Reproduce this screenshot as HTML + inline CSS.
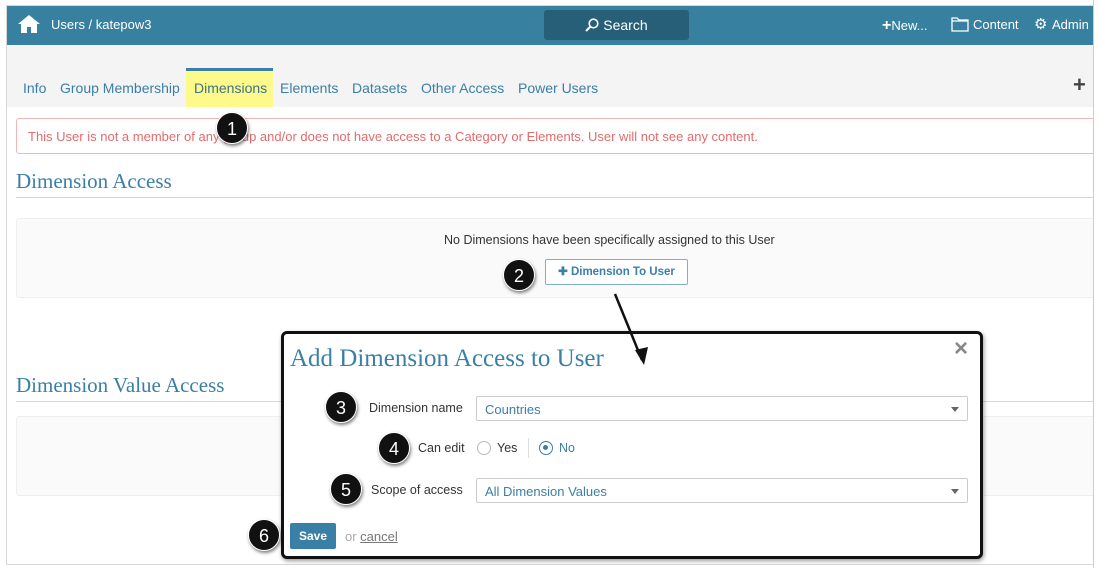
<!DOCTYPE html>
<html><head><style>
*{box-sizing:border-box;margin:0;padding:0}
body{width:1100px;height:568px;background:#fff;font-family:"Liberation Sans",Arial,sans-serif;position:relative;overflow:hidden}
.frame{position:absolute;left:6px;top:5px;width:1088px;height:560px;border:1px solid #d8d8d8;border-right:none}
.hdr{position:absolute;left:7px;top:6px;width:1086px;height:39px;background:#37809f;color:#fff}
.tabs{position:absolute;left:7px;top:45px;width:1086px;height:62px;background:#f4f4f4}
.tab{position:absolute;top:80px;font-size:14px;color:#3a7fa5}
.abs{position:absolute}
.badge{position:absolute;width:32px;height:32px;border-radius:50%;background:#111;color:#fff;font-size:18px;text-align:center;line-height:32px;box-shadow:1px 2px 3px rgba(0,0,0,.5);border:1.5px solid #fff}
.serif{font-family:"Liberation Serif","DejaVu Serif",serif;color:#3a7fa5}
.sel{position:absolute;left:476px;height:25px;width:492px;border:1px solid #ccc;border-radius:2px;font-size:13px;color:#3a7fa5;padding:5px 8px}
.sel:after{content:"";position:absolute;right:8px;top:10px;border:4px solid transparent;border-top:5px solid #666}
</style></head><body>
<div class="frame"></div>
<div class="hdr">
 <svg class="abs" style="left:11px;top:8px" width="22" height="20" viewBox="0 0 22 20"><path d="M11 1L0 10h3v9h6v-6h4v6h6v-9h3z" fill="#fff"/></svg>
 <div class="abs" style="left:44px;top:11px;font-size:13px">Users / katepow3</div>
 <div class="abs" style="left:537px;top:4px;width:145px;height:30px;background:#285f78;border-radius:3px;font-size:14px;text-align:center;line-height:30px">
  <svg width="14" height="14" viewBox="0 0 14 14" style="vertical-align:-2px"><circle cx="8.5" cy="5.5" r="4.3" fill="none" stroke="#fff" stroke-width="1.6"/><path d="M5.5 8.5L1 13" stroke="#fff" stroke-width="2"/></svg> Search</div>
 <div class="abs" style="left:875px;top:11px;font-size:13px"><b style="font-size:16px">+</b>New...</div>
 <svg class="abs" style="left:944px;top:11px" width="18" height="15" viewBox="0 0 18 15"><path d="M1 1h5l2 2h9v11H1z M1 4h16" fill="none" stroke="#fff" stroke-width="1.3"/></svg>
 <div class="abs" style="left:966px;top:11px;font-size:13px">Content</div>
 <div class="abs" style="left:1027px;top:9px;font-size:15px">⚙</div>
 <div class="abs" style="left:1045px;top:11px;font-size:13px">Admin</div>
</div>
<div class="tabs"></div>
<div class="abs" style="left:186px;top:68px;width:87px;height:39px;background:#fdf98a;border-top:3px solid #3a7fa5"></div>
<div class="tab" style="left:23px">Info</div>
<div class="tab" style="left:60px">Group Membership</div>
<div class="tab" style="left:194px;color:#3a7585">Dimensions</div>
<div class="tab" style="left:280px">Elements</div>
<div class="tab" style="left:352px">Datasets</div>
<div class="tab" style="left:421px">Other Access</div>
<div class="tab" style="left:518px">Power Users</div>
<div class="abs" style="left:1073px;top:72px;font-size:22px;font-weight:bold;color:#444">+</div>
<div class="abs" style="left:16px;top:118px;width:1100px;height:36px;border:1px solid #f0b8b8;border-radius:3px;color:#e06c6c;font-size:13px;padding:10px 11px">This User is not a member of any group and/or does not have access to a Category or Elements. User will not see any content.</div>
<div class="badge" style="left:216px;top:112px">1</div>
<div class="abs serif" style="left:16px;top:169px;font-size:21px">Dimension Access</div>
<div class="abs" style="left:16px;top:197px;width:1084px;border-top:1px solid #c9dbe3"></div>
<div class="abs" style="left:16px;top:218px;width:1100px;height:80px;border:1px solid #eee;background:#fafafa;border-radius:3px"></div>
<div class="abs" style="left:444px;top:233px;font-size:12.5px;color:#333">No Dimensions have been specifically assigned to this User</div>
<div class="abs" style="left:545px;top:259px;width:143px;height:26px;border:1px solid #7fb0c8;border-radius:2px;background:#fff;font-size:11.5px;font-weight:bold;color:#3a7fa5;text-align:center;line-height:24px">✚ Dimension To User</div>
<div class="badge" style="left:503px;top:259px">2</div>
<div class="abs serif" style="left:16px;top:373px;font-size:21px">Dimension Value Access</div>
<div class="abs" style="left:16px;top:401px;width:1084px;border-top:1px solid #c9dbe3"></div>
<div class="abs" style="left:16px;top:416px;width:1100px;height:80px;border:1px solid #eee;background:#fafafa;border-radius:3px"></div>
<div class="abs" style="left:1093px;top:0;width:7px;height:568px;background:#fff;border-left:1px solid #ccc"></div>
<div class="abs" style="left:281px;top:331px;width:702px;height:228px;border:3px solid #111;border-radius:6px;background:#fff;box-shadow:1px 2px 4px rgba(0,0,0,.4)"></div>
<svg class="abs" style="left:605px;top:290px" width="50" height="80"><path d="M10 4L37 70" stroke="#111" stroke-width="2.5"/><path d="M30 60L39 75L43 57z" fill="#111"/></svg>
<div class="abs serif" style="left:290px;top:345px;font-size:25px">Add Dimension Access to User</div>
<div class="abs" style="left:954px;top:335px;font-size:24px;color:#888;font-weight:bold">×</div>
<div class="abs" style="left:369px;top:401px;font-size:12.5px;color:#333">Dimension name</div>
<div class="sel" style="top:396px">Countries</div>
<div class="badge" style="left:325px;top:391px">3</div>
<div class="abs" style="left:418px;top:441px;font-size:12.5px;color:#333">Can edit</div>
<div class="abs" style="left:477px;top:441px;width:14px;height:14px;border:1px solid #bbb;border-radius:50%"></div>
<div class="abs" style="left:497px;top:441px;font-size:12.5px;color:#333">Yes</div>
<div class="abs" style="left:528px;top:438px;height:20px;border-left:1px solid #ddd"></div>
<div class="abs" style="left:539px;top:441px;width:14px;height:14px;border:1.5px solid #3a7fa5;border-radius:50%"><div style="width:5px;height:5px;background:#3a7fa5;border-radius:50%;margin:3px"></div></div>
<div class="abs" style="left:559px;top:441px;font-size:12.5px;color:#3a7fa5">No</div>
<div class="badge" style="left:378px;top:432px">4</div>
<div class="abs" style="left:371px;top:483px;font-size:12.5px;color:#333">Scope of access</div>
<div class="sel" style="top:478px">All Dimension Values</div>
<div class="badge" style="left:330px;top:473px">5</div>
<div class="abs" style="left:290px;top:523px;width:46px;height:26px;background:#3a7fa5;border-radius:2px;color:#fff;font-weight:bold;font-size:12px;text-align:center;line-height:26px">Save</div>
<div class="abs" style="left:345px;top:529px;font-size:13px;color:#aaa">or <span style="color:#777;text-decoration:underline">cancel</span></div>
<div class="badge" style="left:248px;top:519px">6</div>
</body></html>
